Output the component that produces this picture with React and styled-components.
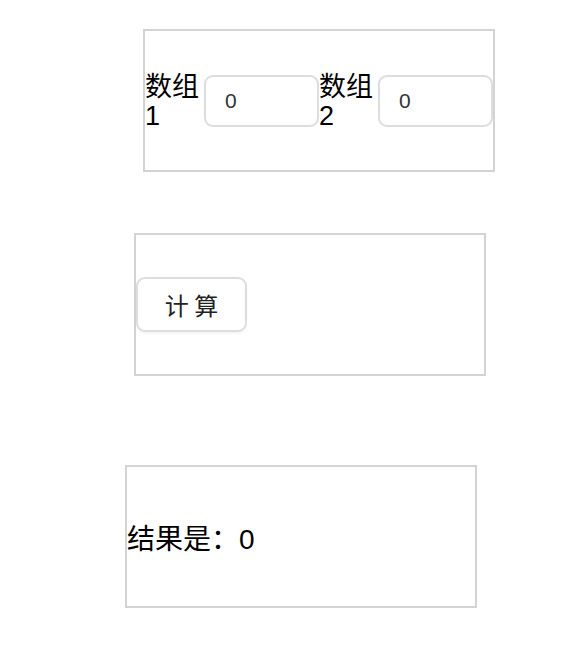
import React, { useState } from "react";
import styled, { createGlobalStyle } from "styled-components";

const GlobalStyle = createGlobalStyle`
  body {
    margin: 0;
    background: #fff;
    font-family: "Liberation Sans", "Noto Sans CJK SC", sans-serif;
    color: #000;
  }
`;

const Page = styled.div`
  display: flex;
  flex-direction: column;
  padding-top: 29px;
`;

const Panel = styled.div`
  box-sizing: border-box;
  width: 352px;
  height: 143px;
  margin-left: ${({ $left }) => $left}px;
  margin-bottom: ${({ $gap }) => $gap || 0}px;
  border: 2px solid #d3d3d3;
  display: flex;
  align-items: center;
`;

const Label = styled.span`
  font-size: 27px;
  line-height: 29px;
  padding-top: 3px;
  flex: 1 1 0;
  min-width: 0;
`;

const NumInput = styled.input`
  box-sizing: border-box;
  width: 115px;
  height: 52px;
  flex: none;
  border: 2px solid #ddd;
  border-radius: 9px;
  padding: 0 0 0 19px;
  font-family: "Liberation Sans", sans-serif;
  font-size: 21px;
  color: #333;
  outline: none;
  background: #fff;
`;

const CalcButton = styled.button`
  box-sizing: border-box;
  width: 111px;
  height: 55px;
  padding: 0;
  border: 2px solid #ddd;
  border-radius: 9px;
  background: #fff;
  box-shadow: 0 2px 2px rgba(0, 0, 0, 0.04);
  font-family: "Noto Sans CJK SC", sans-serif;
  font-size: 24px;
  color: #222;
  cursor: pointer;
`;

const Result = styled.span`
  font-size: 28px;
  line-height: 1;
  padding-top: 6px;
`;

export default function App() {
  const [a, setA] = useState("0");
  const [b, setB] = useState("0");
  const [sum, setSum] = useState(0);

  return (
    <Page>
      <GlobalStyle />
      <Panel $left={143} $gap={61}>
        <Label>数组1</Label>
        <NumInput value={a} onChange={(e) => setA(e.target.value)} />
        <Label>数组2</Label>
        <NumInput value={b} onChange={(e) => setB(e.target.value)} />
      </Panel>
      <Panel $left={134} $gap={89}>
        <CalcButton onClick={() => setSum(Number(a) + Number(b))}>计 算</CalcButton>
      </Panel>
      <Panel $left={125}>
        <Result>结果是：{sum}</Result>
      </Panel>
    </Page>
  );
}
